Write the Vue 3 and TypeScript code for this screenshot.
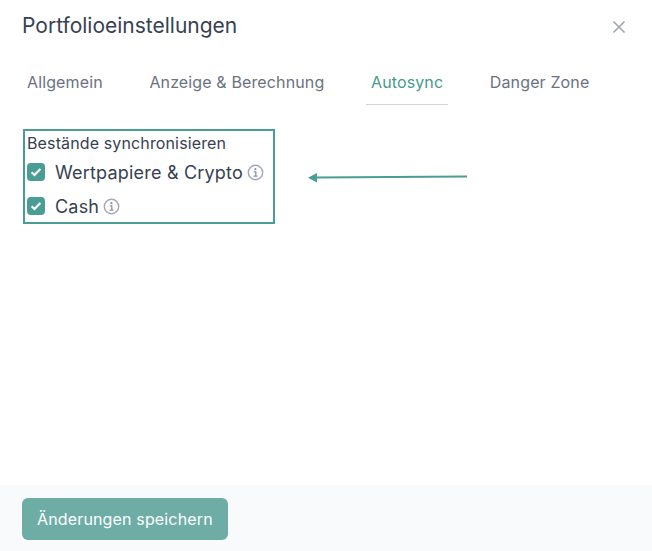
<script setup lang="ts">
const tabs = [
  { label: 'Allgemein', active: false },
  { label: 'Anzeige & Berechnung', active: false },
  { label: 'Autosync', active: true },
  { label: 'Danger Zone', active: false },
]

const options = [
  { label: 'Wertpapiere & Crypto' },
  { label: 'Cash' },
]
</script>

<template>
  <div class="modal">
    <header class="head">
      <h1 class="title">Portfolioeinstellungen</h1>
      <button class="close" aria-label="Schließen">
        <svg width="14" height="14" viewBox="0 0 14 14" fill="none">
          <path d="M1.5 1.5l11 11M12.5 1.5l-11 11" stroke="#9ca3af" stroke-width="1.5" />
        </svg>
      </button>
    </header>

    <nav class="tabs">
      <div v-for="tab in tabs" :key="tab.label" class="tab" :class="{ active: tab.active }">
        {{ tab.label }}
      </div>
    </nav>

    <main class="body">
      <section class="group">
        <div class="group-title">Bestände synchronisieren</div>
        <label v-for="opt in options" :key="opt.label" class="option">
          <span class="check">
            <svg width="12" height="12" viewBox="0 0 12 12" fill="none">
              <path d="M1.6 6.3l2.9 2.7 5.9-6" stroke="#fff" stroke-width="2.2" />
            </svg>
          </span>
          <span class="option-label">{{ opt.label }}</span>
          <svg class="info" width="17" height="17" viewBox="0 0 17 17" fill="none">
            <circle cx="8.5" cy="8.5" r="7.2" stroke="#a3a8b8" stroke-width="1.4" />
            <circle cx="8.4" cy="5.2" r="1.1" fill="#8d93a5" />
            <path d="M6.8 7.8h2v4.2M6.6 12.2h3.8" stroke="#8d93a5" stroke-width="1.3" />
          </svg>
        </label>
      </section>

      <!-- annotation arrow drawn over the screenshot -->
      <svg class="arrow" width="159" height="12" viewBox="0 0 159 12" fill="none">
        <path d="M8 6.6L159 5.6" stroke="#4a9d92" stroke-width="2" />
        <path d="M0 6.7L9 2v9.4z" fill="#4a9d92" />
      </svg>
    </main>

    <footer class="foot">
      <button class="save">Änderungen speichern</button>
    </footer>
  </div>
</template>

<style>
html,
body {
  margin: 0;
  background: #fff;
}
</style>

<style scoped>
.modal {
  width: 652px;
  height: 551px;
  display: flex;
  flex-direction: column;
  font-family: Inter, "Liberation Sans", sans-serif;
  background: #fff;
  overflow: hidden;
}

.head {
  display: flex;
  align-items: center;
  justify-content: space-between;
  padding: 12px 26px 0 22px;
  height: 27px;
}

.title {
  margin: 0;
  font-size: 21px;
  font-weight: 400;
  line-height: 27px;
  color: #374151;
}

.close {
  display: flex;
  padding: 0;
  border: 0;
  background: none;
  margin-top: 2px;
}

.tabs {
  display: flex;
  gap: 36.6px;
  margin-top: 19px;
  padding-left: 22px;
}

.tab {
  padding: 14px 5px 12px;
  font-size: 16px;
  line-height: 20px;
  letter-spacing: 0.13px;
  color: #6b7280;
  border-bottom: 1px solid transparent;
}

.tab.active {
  color: #459a8e;
  border-bottom-color: #d1d5db;
}

.body {
  flex: 1;
  position: relative;
  padding: 24px 0 0 23px;
}

.group {
  box-sizing: border-box;
  width: 252px;
  height: 95px;
  padding: 2px 2px 4px;
  border: 2px solid #4a9d92;
}

.group-title {
  margin-bottom: 2px;
  font-size: 16px;
  line-height: 20px;
  letter-spacing: 0.13px;
  color: #374151;
}

.option {
  display: flex;
  align-items: center;
  height: 34px;
}

.check {
  width: 18px;
  height: 18px;
  border-radius: 4px;
  background: #4a9d92;
  display: flex;
  align-items: center;
  justify-content: center;
  margin-right: 10px;
}

.option-label {
  font-size: 18px;
  letter-spacing: 0.2px;
  color: #374151;
}

.info {
  margin-left: 4px;
}

.arrow {
  position: absolute;
  left: 308px;
  top: 66px;
}

.foot {
  background: #f9fafb;
  padding: 13px 22px 11px;
}

.save {
  display: block;
  height: 42px;
  padding: 0 15px;
  border: 0;
  border-radius: 6px;
  background: #6dada6;
  color: #fff;
  font-family: inherit;
  font-size: 16px;
  letter-spacing: 0.15px;
}
</style>
